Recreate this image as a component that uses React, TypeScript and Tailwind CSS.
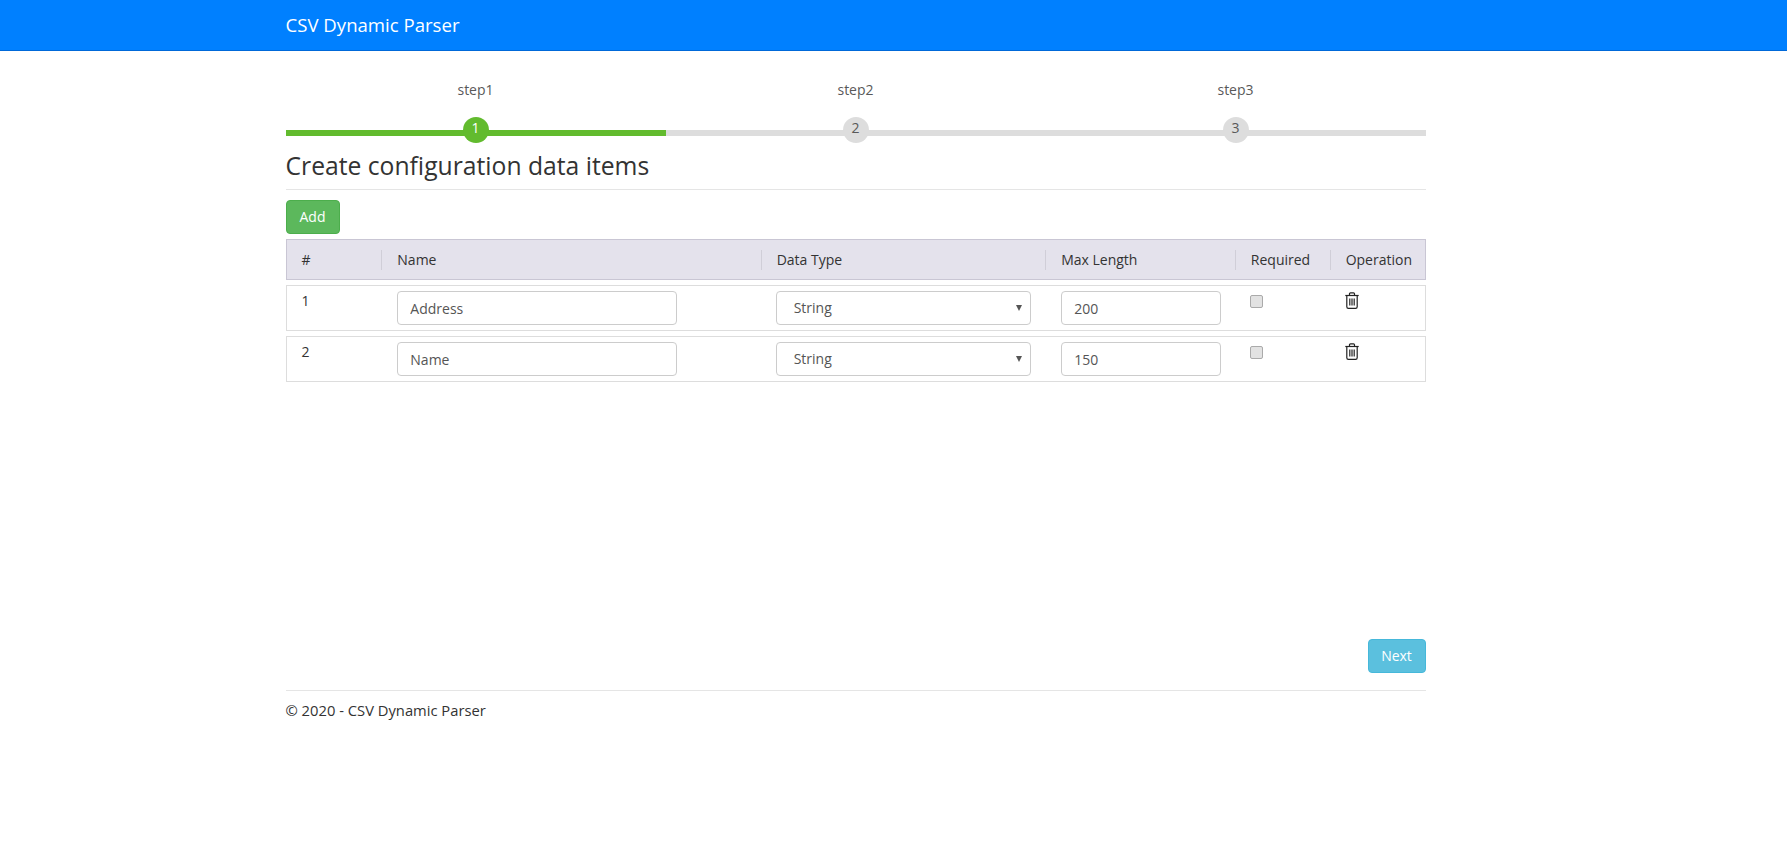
import React from 'react';

const columns = [
  { label: '#', span: 'col-span-1' },
  { label: 'Name', span: 'col-span-4' },
  { label: 'Data Type', span: 'col-span-3' },
  { label: 'Max Length', span: 'col-span-2' },
  { label: 'Required', span: 'col-span-1' },
  { label: 'Operation', span: 'col-span-1' },
];

const rows = [
  { id: 1, name: 'Address', type: 'String', length: '200' },
  { id: 2, name: 'Name', type: 'String', length: '150' },
];

const steps = [
  { id: 1, label: 'step1', active: true },
  { id: 2, label: 'step2', active: false },
  { id: 3, label: 'step3', active: false },
];

const inputClass =
  'h-[34px] rounded border border-[#ccc] bg-white px-3 text-[14px] text-[#555] outline-none';

const TrashIcon = () => (
  <svg
    viewBox="0 0 14 17"
    fill="none"
    stroke="#222"
    strokeWidth="1.2"
    className="h-[17px] w-[14px]"
  >
    <path d="M4.5 3.5V1.8q0-1 1-1h3q1 0 1 1v1.7" />
    <path d="M0.3 3.5H13.7" />
    <path d="M1.8 3.5V14.8q0 1.6 1.6 1.6h7.2q1.6 0 1.6-1.6V3.5" />
    <path d="M4.8 6.5V13.5M7 6.5V13.5M9.2 6.5V13.5" />
  </svg>
);

const App: React.FC = () => {
  return (
    <div className="min-h-screen bg-white font-['Open_Sans','Liberation_Sans',sans-serif] text-[14px] leading-[20px] text-[#333]">
      {/* Navbar */}
      <header className="h-[51px] bg-[#0080ff] border-b border-[#0069d9]">
        <div className="mx-auto w-[1140px] -translate-x-[38px] h-full flex items-center">
          <span className="text-[18.6px] text-white">CSV Dynamic Parser</span>
        </div>
      </header>

      <main className="mx-auto w-[1140px] -translate-x-[38px]">
        {/* Steps */}
        <div className="grid grid-cols-3 pt-[29px]">
          {steps.map((step) => (
            <div key={step.id} className="flex flex-col items-center">
              <div className="h-[20px] text-[#595959]">{step.label}</div>
              <div className="relative mt-[17px] h-[26px] w-full">
                <div
                  className={`absolute left-0 right-0 top-[13px] h-[6px] ${
                    step.active ? 'bg-[#62bb2e]' : 'bg-[#dddddd]'
                  }`}
                />
                <div
                  className={`absolute left-1/2 top-0 -ml-[13px] flex h-[26px] w-[26px] items-start justify-center rounded-full pt-[1px] text-[14px] ${
                    step.active ? 'bg-[#62bb2e] text-white' : 'bg-[#dddddd] text-[#595959]'
                  }`}
                >
                  {step.id}
                </div>
              </div>
            </div>
          ))}
        </div>

        {/* Heading */}
        <h2 className="mt-[6px] h-[41px] border-b border-[#e5e5e5] text-[24.7px] leading-[34px] font-normal text-[#333]">
          Create configuration data items
        </h2>

        <button className="mt-[10px] block h-[34px] w-[54px] rounded border border-[#4cae4c] bg-[#5cb85c] text-[14px] text-white">
          Add
        </button>

        {/* Table */}
        <div className="mt-[5px] grid h-[41px] grid-cols-12 items-center border border-[#c9c6d4] bg-[#e4e2ec]">
          {columns.map((col, i) => (
            <div
              key={col.label}
              className={`${col.span} flex h-[20px] items-center whitespace-nowrap pl-[15px] ${
                i > 0 ? 'border-l border-[#d0ced8]' : ''
              }`}
            >
              {col.label}
            </div>
          ))}
        </div>

        {rows.map((row) => (
          <div
            key={row.id}
            className="mt-[5px] grid h-[46px] grid-cols-12 border border-[#ddd] pt-[5px]"
          >
            <div className="col-span-1 pl-[15px]">{row.id}</div>
            <div className="col-span-4 pl-[16px]">
              <input className={`${inputClass} w-[280px]`} defaultValue={row.name} />
            </div>
            <div className="col-span-3 pl-[15px]">
              <div className="relative w-[255px]">
                <select
                  defaultValue={row.type}
                  className={`${inputClass} w-full appearance-none pl-[17px]`}
                >
                  <option>String</option>
                  <option>Int</option>
                </select>
                <span className="absolute right-[9px] top-[14px] h-0 w-0 border-x-[3px] border-t-[6px] border-x-transparent border-t-[#555]" />
              </div>
            </div>
            <div className="col-span-2 pl-[16px]">
              <input className={`${inputClass} w-[160px]`} defaultValue={row.length} />
            </div>
            <div className="col-span-1 pl-[15px]">
              <input
                type="checkbox"
                className="mt-[4px] block h-[13px] w-[13px] appearance-none rounded-[2px] border border-[#aaa] bg-[#e2e2e2]"
              />
            </div>
            <div className="col-span-1 pl-[15px] pt-[1px]">
              <TrashIcon />
            </div>
          </div>
        ))}

        {/* Next */}
        <div className="mt-[257px] flex justify-end">
          <button className="h-[34px] w-[58px] rounded border border-[#46b8da] bg-[#5bc0de] text-[14px] text-white">
            Next
          </button>
        </div>

        {/* Footer */}
        <footer className="mt-[17px] border-t border-[#e5e5e5] pt-[9px]">
          <p className="text-[14.75px] text-[#333]">© 2020 - CSV Dynamic Parser</p>
        </footer>
      </main>
    </div>
  );
};

export default App;
